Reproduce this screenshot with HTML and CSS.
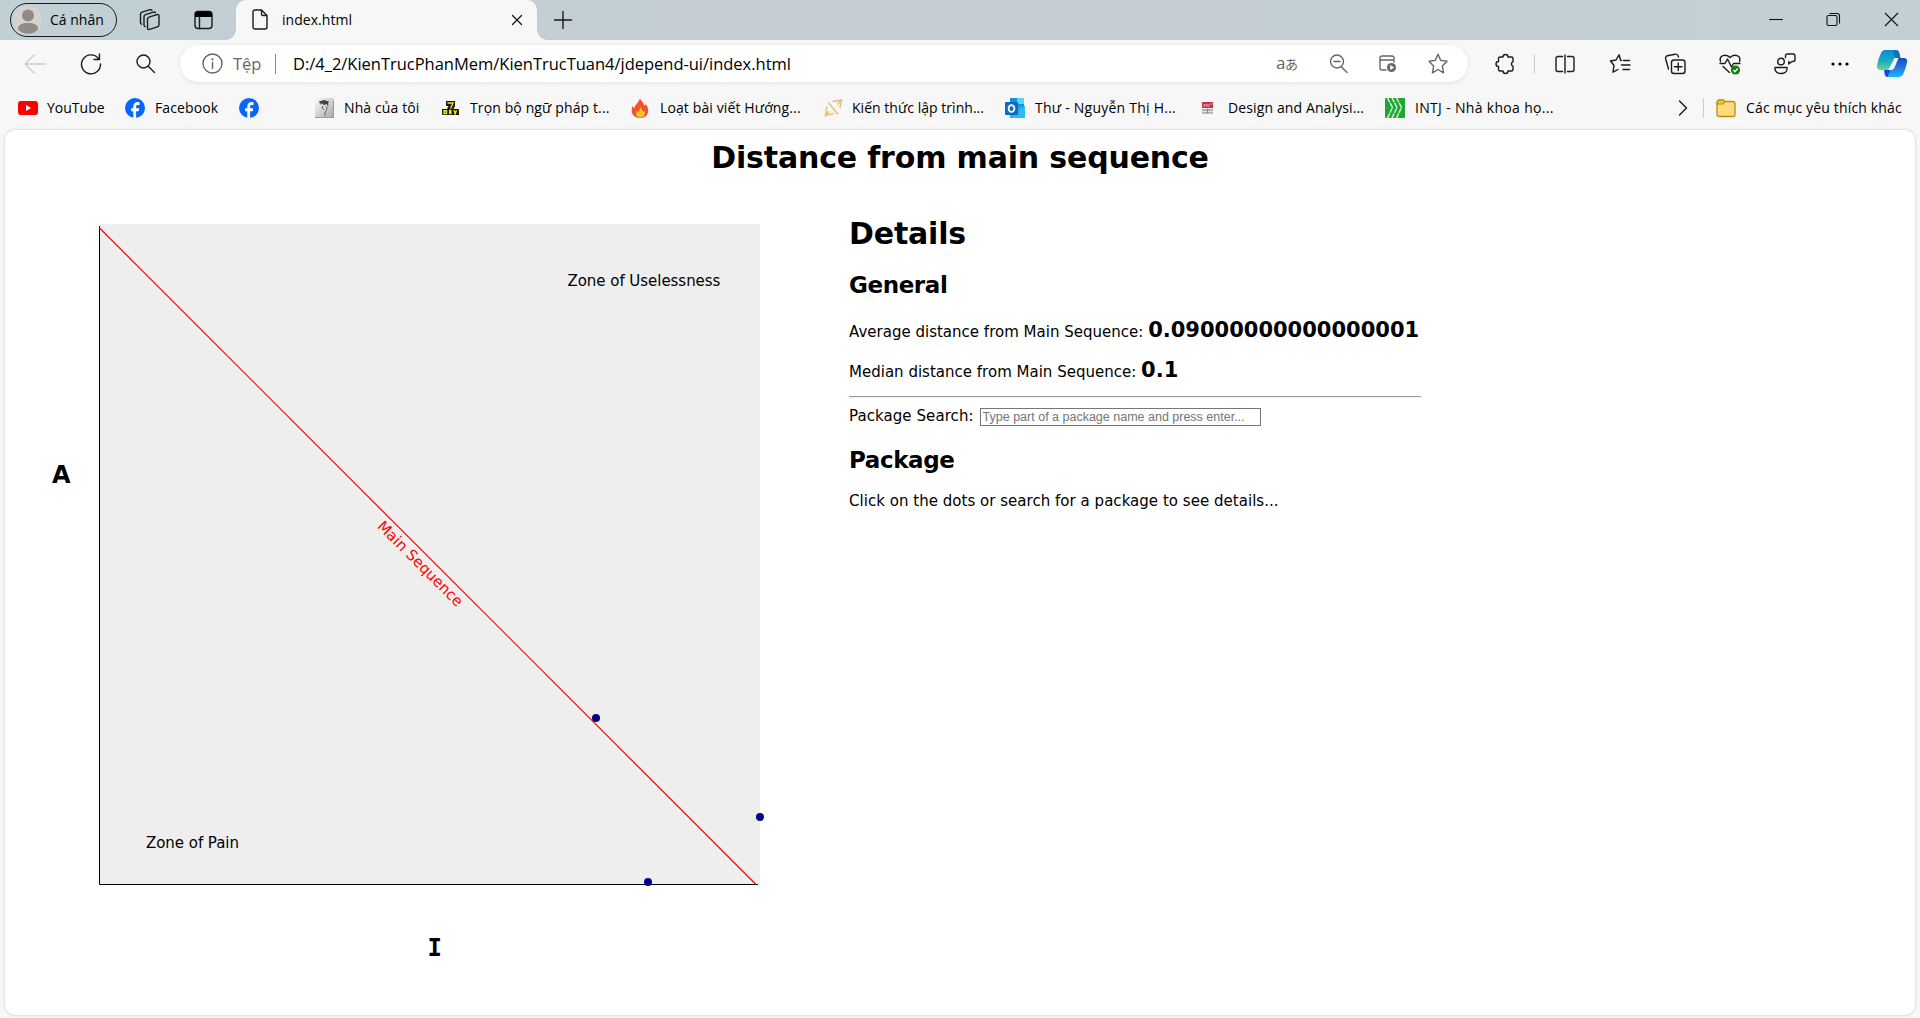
FILE: index.html
```html
<!DOCTYPE html>
<html lang="vi">
<head>
<meta charset="utf-8">
<title>index.html</title>
<link rel="stylesheet" href="styles.css">
</head>
<body>
<header class="tabstrip">
  <div class="profile">
    <svg class="avatar" width="28" height="28" viewBox="0 0 28 28"><circle cx="14" cy="14" r="14" fill="#d5d2ce"/><circle cx="14" cy="9.500" r="6" fill="#908b87"/><path d="M4 23.500c0-5 4-6.500 10-6.500s10 1.500 10 6.500a14 14 0 0 1-20 0z" fill="#908b87"/></svg>
    <span>Cá nhân</span>
  </div>
  <svg class="ic-work" width="24" height="24" viewBox="0 0 24 24"><g class="ln"><path d="M9.500 11.200q0-1.600 1.500-2l8-2.600q2-.5 2 1.500v8.700q0 1.600-1.500 2l-8 2.600q-2 .5-2-1.500z"/><path d="M7 18.700q-1-.4-1-1.700V8.700q0-1.600 1.500-2.100l8-2.500q1.400-.3 1.900.7"/><path d="M3.500 16.200q-1-.4-1-1.700V6.300q0-1.600 1.500-2.100l8-2.500q1.400-.3 1.900.7"/></g></svg>
  <svg class="ic-side" width="20" height="20" viewBox="0 0 20 20"><rect x="1" y="1.500" width="17" height="17" rx="3" class="ln"/><path d="M1 7V4.500a3 3 0 0 1 3-3h11a3 3 0 0 1 3 3V7z"/><path class="ln" d="M5.500 7v11.500"/></svg>
  <div class="tab">
    <svg width="16" height="21" viewBox="0 0 16 21"><path class="ln" d="M3 1h6.500L15 6.500V18a2 2 0 0 1-2 2H3a2 2 0 0 1-2-2V3a2 2 0 0 1 2-2zM9.500 1v4a1.500 1.500 0 0 0 1.500 1.500h4"/></svg>
    <span class="tab-title">index.html</span>
    <svg class="tab-x" width="12" height="12" viewBox="0 0 12 12"><path class="ln" d="M1.500 1.500l9 9M10.500 1.500l-9 9"/></svg>
  </div>
  <svg class="ic-plus" width="20" height="20" viewBox="0 0 20 20"><path class="ln" d="M10 1.500v17M1.500 10h17"/></svg>
  <div class="winctl">
    <svg width="14" height="14" viewBox="0 0 14 14"><path class="thin" d="M0 6.500h14"/></svg>
    <svg width="15" height="15" viewBox="0 0 15 15"><rect class="thin" x="1" y="3.500" width="10" height="10" rx="1.500"/><path class="thin" d="M3.500 1.500h7.500a2.500 2.500 0 0 1 2.500 2.500v7.500"/></svg>
    <svg width="15" height="15" viewBox="0 0 15 15"><path class="thin" d="M1 1l13 13M14 1L1 14"/></svg>
  </div>
</header>

<nav class="toolbar">
  <div class="navbtns">
    <svg width="22" height="20" viewBox="0 0 22 20"><path class="ln faint" d="M21 10H1M10 1l-9 9 9 9"/></svg>
    <svg width="22" height="22" viewBox="0 0 22 22"><path class="ln" d="M18.500 5.500A9.500 9.500 0 1 0 20.500 11M19.500 1v5.500h-5.500"/></svg>
    <svg width="20" height="20" viewBox="0 0 20 20"><path class="ln" d="M12.500 12.500l6 6M14 7.500a6.500 6.500 0 1 1-13 0 6.500 6.500 0 0 1 13 0z"/></svg>
  </div>
  <div class="omnibox">
    <svg width="21" height="21" viewBox="0 0 21 21"><circle class="ln gray" cx="10.500" cy="10.500" r="9.500"/><path class="ln gray" d="M10.500 9.500v6"/><circle cx="10.500" cy="6.300" r="1.100" fill="#666"/></svg>
    <span class="scheme">Tệp</span>
    <i class="bar"></i>
    <span class="url">D:/4_2/KienTrucPhanMem/KienTrucTuan4/jdepend-ui/index.html</span>
    <div class="omni-actions">
      <span class="translate">a<small>あ</small></span>
      <svg width="20" height="20" viewBox="0 0 20 20"><path class="ln gray" d="M12 12.500l6 6M14.500 7.500a6.500 6.500 0 1 1-13 0 6.500 6.500 0 0 1 13 0zM5 7.500h6"/></svg>
      <svg width="18" height="18" viewBox="0 0 18 18"><path class="ln gray" d="M7 15H3a2 2 0 0 1-2-2V3a2 2 0 0 1 2-2h10a2 2 0 0 1 2 2v4M1 5h14"/><circle cx="12.500" cy="12.500" r="4.500" fill="#666"/><path d="M11.200 10l4 2.500-4 2.500z" fill="#fff"/></svg>
      <svg width="22" height="21" viewBox="0 0 22 21"><path class="ln gray" d="M11 1.200l2.700 6.200 6.300.9-4.700 4.700 1.300 6.800L11 16.500l-5.600 3.300L6.700 13 2 8.300l6.300-.9z"/></svg>
    </div>
  </div>
  <div class="tools">
    <svg width="22" height="22" viewBox="0 0 22 22"><path class="ln" d="M6 4h3a2.500 2.500 0 0 1 5 0h3.500q1.500 0 1.500 1.500v3.200a2.500 2.500 0 0 0 0 4.600v3.200q0 1.500-1.500 1.500H14a2.500 2.500 0 0 1-5 0H6q-1.500 0-1.500-1.500v-3a2.500 2.500 0 0 1 0-5v-3Q4.500 4 6 4z"/></svg>
    <i class="sep"></i>
    <svg width="22" height="22" viewBox="0 0 22 22"><path class="ln" d="M8.500 3.500H4a2 2 0 0 0-2 2v11a2 2 0 0 0 2 2h4.500M13.500 3.500H18a2 2 0 0 1 2 2v11a2 2 0 0 1-2 2h-4.500M11 2v18"/></svg>
    <svg width="22" height="22" viewBox="0 0 22 22"><path class="ln" d="M12.500 7.500L11.500 7 10 1.800 7 7l-5.500 1L5 12.500l-1 6.700 5-2.700M14.500 7.500h6M12.500 12h8.500M14 16.500h6.500"/></svg>
    <svg width="22" height="22" viewBox="0 0 22 22"><path class="ln" d="M4.500 16L1.700 6a2.500 2.500 0 0 1 1.700-3.300L11 1.200q2-.4 3 1.300l.5 1.500"/><rect class="ln" x="7.500" y="7" width="13.500" height="13.500" rx="2.500"/><path class="ln" d="M14.200 10v7.500M10.500 13.800h7.500"/></svg>
    <svg width="22" height="22" viewBox="0 0 22 22"><path class="ln" d="M1.500 8.500C-.5 2.500 7 .2 11 4.500c4-4.300 11.500-2 9.500 4M1 10.500h5l2.500-4.500 4 8 2-3.500h6.500M4 13.500l6.500 6"/><circle cx="16.500" cy="17" r="4.600" fill="#107c10"/><path d="M14.300 17l1.700 1.700 2.700-3.200" fill="none" stroke="#fff" stroke-width="1.300"/></svg>
    <svg width="22" height="22" viewBox="0 0 22 22"><circle class="ln" cx="7" cy="8.500" r="3.300"/><path class="ln" d="M1 14.500h12v1.500c0 6-12 6-12 0zM11.500 4.500v-1.500q0-2 2-2h5.500q2 0 2 2v3.500q0 2-2 2h-1l-3.200 2.500V8.500"/></svg>
    <svg width="22" height="22" viewBox="0 0 22 22"><circle cx="4" cy="11" r="1.600"/><circle cx="11" cy="11" r="1.600"/><circle cx="18" cy="11" r="1.600"/></svg>
  </div>
  <svg class="copilot" width="31" height="28" viewBox="0 0 31 28">
    <defs>
      <linearGradient id="ca" x1="0" y1="0" x2="0" y2="1"><stop offset="0" stop-color="#0a8fd0"/><stop offset=".5" stop-color="#16a6c4"/><stop offset="1" stop-color="#62d896"/></linearGradient>
      <linearGradient id="cb" x1="0" y1="0" x2="0" y2="1"><stop offset="0" stop-color="#1849c0"/><stop offset=".5" stop-color="#2676e8"/><stop offset="1" stop-color="#18b8f8"/></linearGradient>
    </defs>
    <path d="M20 8h6.500q4.500 0 3.500 4.500-1.200 6-3.500 11Q25 27 21.500 27H11q-2.500 0-3.200-2.500L7 18h7z" fill="url(#cb)"/>
    <path d="M7 18h7l-3.500 9q-2.200-.2-2.700-2.500z" fill="#1b48cf"/>
    <path d="M8.500 0H19q2.500 0 3.200 2.500L23.500 8H18l-4 8q-1.500 4-5 4H4q-5 0-3.800-5Q1.500 8 3.800 3.500 5 0 8.500 0z" fill="url(#ca)"/>
    <path d="M16 0h3q2.500 0 3.200 2.500L23.500 8H18z" fill="#0b62b5" opacity=".7"/>
    <path d="M17.500 8h4l-4 9.500q-1.300 2.500-3.500 2.500h-4q2.500-1 3.500-4z" fill="#f7f7f7"/>
  </svg>
</nav>

<nav class="bookmarks">
  <a class="bm b1"><svg width="20" height="20" viewBox="0 0 20 20"><rect y="3" width="20" height="14" rx="3" fill="#f00"/><path d="M8 7l5 3-5 3z" fill="#fff"/></svg><span>YouTube</span></a>
  <a class="bm b2"><svg width="20" height="20" viewBox="0 0 20 20"><circle cx="10" cy="10" r="10" fill="#0866ff"/><path d="M8.300 20v-6.800H6.200v-3h2.100V8.800c0-3.300 1.500-4.800 4.700-4.800q1 0 1.500.2v2.700h-1.300c-1.600 0-2.100.6-2.100 2.200v1.100h3.100l-.5 3h-2.600V20z" fill="#fff"/></svg><span>Facebook</span></a>
  <a class="bm b3"><svg width="20" height="20" viewBox="0 0 20 20"><circle cx="10" cy="10" r="10" fill="#0866ff"/><path d="M8.300 20v-6.800H6.200v-3h2.100V8.800c0-3.300 1.500-4.800 4.700-4.800q1 0 1.500.2v2.700h-1.300c-1.600 0-2.100.6-2.100 2.200v1.100h3.100l-.5 3h-2.600V20z" fill="#fff"/></svg></a>
  <a class="bm b4"><svg width="19" height="20" viewBox="0 0 19 20"><defs><linearGradient id="gr" x1="0" y1="0" x2="1" y2="1"><stop offset="0" stop-color="#fafafa"/><stop offset="1" stop-color="#a8a8a8"/></linearGradient></defs><rect width="19" height="20" rx="1" fill="url(#gr)"/><path d="M4 3.500l5-1.500 5 1.500-1 2 .5 2-1 .5-.5-2-3 1-3-2-.5 2z" fill="#444"/><path d="M7.500 8v2.500l1.500 1.500M12 8.500l-.5 4-1.500 1.500v4" fill="none" stroke="#666"/><path d="M0 19.500h18.500V3" fill="none" stroke="#999"/></svg><span>Nhà của tôi</span></a>
  <a class="bm b5"><svg width="19" height="20" viewBox="0 0 19 20"><path d="M5 3h9v5l-1.500 3H17q1 0 1 1v5H2q-1 0-1-1v-5h5l1.500-3H5z" fill="#1a1a10"/><path d="M6.500 5h5.500L9.500 10.500M3 12.800h2.500v2.700H3zM8 12.500h2.500M8 14h2.500M8 15.500h2.500M13 12.300l1.200 3.500 1.300-3.500" fill="none" stroke="#f5e416" stroke-width="1.400"/></svg><span>Trọn bộ ngữ pháp t...</span></a>
  <a class="bm b6"><svg width="18" height="20" viewBox="0 0 18 20"><path d="M9 0c1 4 4 4 4.500 8L15 6c5 8 1 14-6 14S-1 14 1.500 8q1 2 2 2C4 6 8 5 9 0z" fill="#f4512e"/><path d="M10 9c0 3 2 3 2.500 5l1-1.500c1.500 4-1 7-4.500 7s-5-3-3-6.500l1.500 1.500C7.500 12 9 11 10 9z" fill="#ffc62b"/></svg><span>Loạt bài viết Hướng...</span></a>
  <a class="bm b7"><svg width="20" height="20" viewBox="0 0 20 20"><path d="M8.500 3.500L17.500 2 16 10M3 8.500L1.500 17.500l8-2M4.500 4.500L14 16.500M16.500 3l-3 3.500M2 17l3-3.500" fill="none" stroke="#e0c17c" stroke-width="1.500"/></svg><span>Kiến thức lập trình...</span></a>
  <a class="bm b8"><svg width="20" height="20" viewBox="0 0 20 20"><path d="M5 0h14v13H5z" fill="#1490df"/><path d="M12 0h7v6h-7z" fill="#50d9ff"/><path d="M5 9l15-1v12H5z" fill="#28a8ea"/><path d="M5 20l15-12v12z" fill="#35b8f1"/><rect y="4" width="13" height="13" rx="1" fill="#0f6cbd"/><ellipse cx="6.500" cy="10.500" rx="2.900" ry="3.400" fill="none" stroke="#fff" stroke-width="1.800"/></svg><span>Thư - Nguyễn Thị H...</span></a>
  <a class="bm b9"><svg width="11" height="12" viewBox="0 0 11 12"><rect width="11" height="6" fill="#c33145"/><path d="M2 5V2l1.500 1.500L5 2v3M7 2v3M8 2h2.500" fill="none" stroke="#f0c5ca" stroke-width=".8"/><path d="M0 8h11M0 10.800h11" stroke="#b4aeaa" stroke-width="2"/><path d="M5.500 6.500v5" stroke="#888"/></svg><span>Design and Analysi...</span></a>
  <a class="bm b10"><svg width="20" height="20" viewBox="0 0 20 20"><rect width="20" height="20" rx="1" fill="#1fa637"/><path d="M2.500 0l5 9.500-5 10.500M7 0l5 9.500L7 20M11.500 0l5 9.500-5 10.500" fill="none" stroke="#d9f2d6" stroke-width="1.500" stroke-dasharray="5 .8"/></svg><span>INTJ - Nhà khoa họ...</span></a>
  <svg class="more" width="10" height="16" viewBox="0 0 10 16"><path class="ln" d="M1.500 1l7 7-7 7"/></svg>
  <i class="sep"></i>
  <a class="bm b11"><svg width="20" height="18" viewBox="0 0 20 18"><path d="M1 15.500v-12A2.500 2.500 0 0 1 3.500 1H7l2 1.500h7.500A2.500 2.500 0 0 1 19 5v10.500a2 2 0 0 1-2 2H3a2 2 0 0 1-2-2z" fill="#ffdb7d" stroke="#b98c13" stroke-width="1.300"/><path d="M1 4.500Q1 1 3.500 1H7l2 1.500-2 2.500H1z" fill="#f3c132" stroke="#b98c13" stroke-width="1.200"/></svg><span>Các mục yêu thích khác</span></a>
</nav>

<main class="page">
  <h1 class="title">Distance from main sequence</h1>
  <div class="columns">
    <svg class="chart" width="800" height="820" viewBox="5 176 800 820">
      <rect x="99" y="224" width="661" height="661" fill="#eee"/>
      <path d="M99.500 226v658.500H758" fill="none" stroke="#000"/>
      <path d="M99.500 228L756 884.500" stroke="#f00" stroke-width="1.200"/>
      <text x="567.500" y="286">Zone of Uselessness</text>
      <text x="146" y="848">Zone of Pain</text>
      <text class="seq" transform="translate(376.500 527) rotate(45)">Main Sequence</text>
      <text class="axis" x="52" y="483">A</text>
      <text class="axis serif" x="427.500" y="956">I</text>
      <g fill="#00008b"><circle cx="596" cy="718" r="4"/><circle cx="760" cy="817" r="4"/><circle cx="648" cy="882" r="4"/></g>
    </svg>
    <section class="details">
      <h1>Details</h1>
      <h2>General</h2>
      <p class="stat">Average distance from Main Sequence: <strong>0.09000000000000001</strong></p>
      <p class="stat">Median distance from Main Sequence: <strong>0.1</strong></p>
      <div class="rule"></div>
      <label class="search"><span>Package Search:</span> <input type="text" placeholder="Type part of a package name and press enter..."></label>
      <h2>Package</h2>
      <p class="hint">Click on the dots or search for a package to see details...</p>
    </section>
  </div>
</main>
</body>
</html>
```
FILE: styles.css
```css
* { box-sizing: border-box; }

body {
  margin: 0;
  width: 1920px;
  height: 1018px;
  overflow: hidden;
  background: #f7f7f7;
  color: #000;
  font-family: "Open Sans", "Noto Sans CJK JP", sans-serif;
  font-size: 14px;
}

svg { display: block; flex: none; overflow: visible; }
span { white-space: nowrap; }
h1, h2, p { margin: 0; }

.ln { fill: none; stroke: #1b1b1b; stroke-width: 1.4; stroke-linecap: round; stroke-linejoin: round; }
.thin { fill: none; stroke: #111; stroke-width: 1.1; }
.gray { stroke: #666; }
.faint { stroke: #ccc; }

/* Tab strip */
.tabstrip {
  height: 40px;
  padding-bottom: 1px;
  display: flex;
  align-items: center;
  background: linear-gradient(90deg, #c0d0d5, #c5ced4 45%, #c2d0d5);
}
.profile {
  width: 107px;
  height: 34px;
  margin-left: 10px;
  padding-left: 3px;
  display: flex;
  align-items: center;
  gap: 8px;
  border: 1.5px solid #1b1b1b;
  border-radius: 17px;
}
.ic-work { margin-left: 21px; }
.ic-side { margin-left: 32px; }
.tab {
  position: relative;
  align-self: flex-start;
  width: 301px;
  height: 40px;
  margin-left: 22px;
  padding: 0 14px 1px 16px;
  display: flex;
  align-items: center;
  background: #f7f7f7;
  border-radius: 10px 10px 0 0;
}
.tab::before, .tab::after {
  content: "";
  position: absolute;
  bottom: 0;
  width: 10px;
  height: 10px;
}
.tab::before { left: -10px; background: radial-gradient(circle at 0 0, transparent 9.5px, #f7f7f7 10px); }
.tab::after { right: -10px; background: radial-gradient(circle at 100% 0, transparent 9.5px, #f7f7f7 10px); }
.tab-title { margin-left: 14px; letter-spacing: .04px; }
.tab-x { margin-left: auto; }
.ic-plus { margin-left: 16px; }
.winctl {
  margin: 0 21px 0 auto;
  display: flex;
  align-items: center;
  gap: 43px;
}

/* Address row */
.toolbar {
  height: 50px;
  padding-bottom: 2px;
  display: flex;
  align-items: center;
}
.navbtns {
  width: 180px;
  padding-left: 24px;
  display: flex;
  align-items: center;
  gap: 34px;
}
.omnibox {
  width: 1288px;
  height: 37px;
  margin-bottom: 1px;
  padding: 0 19px 0 22px;
  display: flex;
  align-items: center;
  background: #fff;
  border-radius: 19px;
  box-shadow: 0 1px 5px rgba(0, 0, 0, .09);
}
.scheme, .url { font-size: 16.5px; letter-spacing: -.02px; }
.scheme { margin-left: 10px; width: 28px; color: #666; }
.bar { width: 1px; height: 20px; margin: 0 17px 0 14px; background: #888; }
.omni-actions {
  margin-left: auto;
  display: flex;
  align-items: center;
  gap: 30px;
}
.translate { width: 23px; color: #666; font-size: 17px; line-height: 20px; letter-spacing: -.5px; }
.translate small { font-size: 13px; }
.tools {
  margin-left: 26px;
  display: flex;
  align-items: center;
  gap: 33px;
}
.sep { width: 1px; height: 20px; background: #ccc; }
.tools .sep { margin: 0 -14px 0 -15px; }
.copilot { margin-left: 26px; }

/* Bookmarks row */
.bookmarks {
  height: 37px;
  padding: 0 0 2px 18px;
  display: flex;
  align-items: center;
}
.bm { display: flex; align-items: center; gap: 10px; height: 20px; line-height: 20px; letter-spacing: .12px; }
.b1 { width: 107px; letter-spacing: 0; gap: 9px; }
.b2 { width: 114px; }
.b3 { width: 76px; }
.b4 { width: 126px; }
.b5 { width: 190px; }
.b6 { width: 193px; gap: 11px; }
.b7 { width: 181px; gap: 8px; letter-spacing: .03px; }
.b8 { width: 197px; letter-spacing: .24px; }
.b9 { width: 183px; gap: 15px; }
.b10 { width: 293px; letter-spacing: .32px; }
.b11 { letter-spacing: .16px; }
.bookmarks .sep { margin: 0 12px 0 15px; }

/* Page surface */
.page {
  width: 1910px;
  height: 885px;
  margin: 3px 5px 0;
  padding-top: 10px;
  background: #fff;
  border-radius: 10px;
  box-shadow: 0 0 3px rgba(0, 0, 0, .22);
  font-family: "DejaVu Sans", sans-serif;
  font-size: 15px;
}
.title { font-size: 30px; line-height: 36px; text-align: center; letter-spacing: -.17px; }
.columns { display: flex; gap: 44px; }
.chart text { font-size: 15px; letter-spacing: -.04px; }
.chart .seq { fill: #f00; font-size: 14.8px; letter-spacing: .06px; }
.chart .axis { font-size: 24px; font-weight: bold; }
.chart .serif { font-family: "DejaVu Sans Mono", monospace; }

.details { width: 572px; padding-top: 40px; }
.details h1 { font-size: 30px; line-height: 36px; letter-spacing: -.18px; }
.details h2 { margin-top: 18px; font-size: 23px; line-height: 30px; letter-spacing: -.4px; }
.stat { margin-top: 10px; line-height: 30px; white-space: nowrap; letter-spacing: .01px; }
h2 + .stat { margin-top: 17px; }
.stat strong { font-size: 21px; line-height: 1; letter-spacing: 0; }
.rule { height: 2px; margin-top: 9px; border-top: 1px solid #9a9a9a; border-bottom: 1px solid #eee; }
.search { display: flex; align-items: center; height: 20px; margin-top: 8px; line-height: 20px; letter-spacing: .07px; }
.search input {
  width: 281px;
  height: 18px;
  margin: 2px 0 0 6px;
  padding: 0 2px;
  border: 1px solid #767676;
  font: 12.5px "Liberation Sans", sans-serif;
}
.search input::placeholder { color: #757575; }
.search + h2 { margin-top: 19px; }
.hint { margin-top: 16px; line-height: 20px; letter-spacing: .03px; }
```
